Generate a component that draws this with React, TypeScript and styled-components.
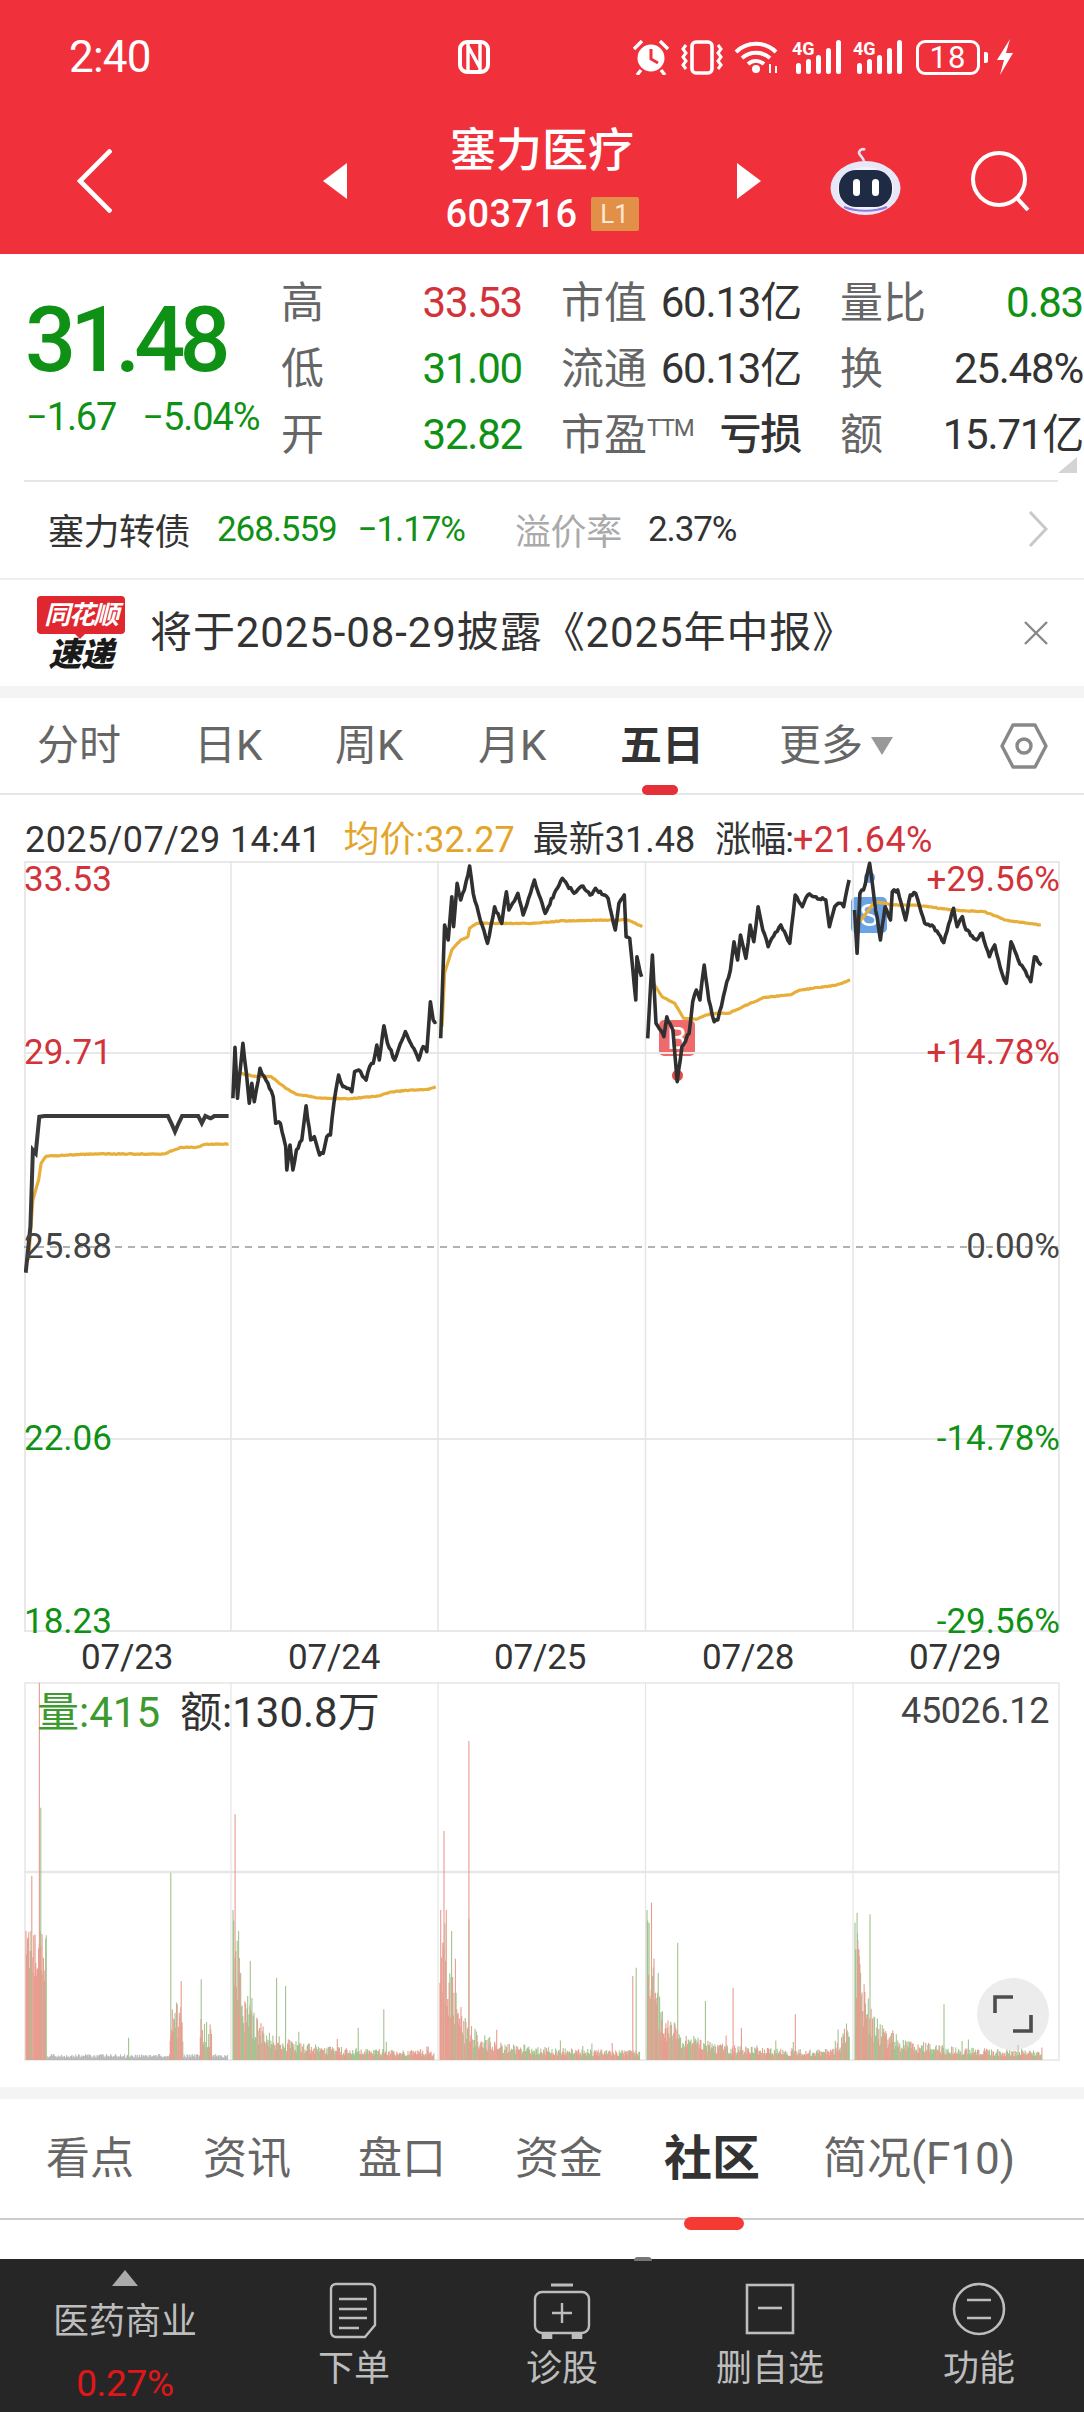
import React from "react";
import styled, { createGlobalStyle } from "styled-components";

const FONT = `Roboto, "Noto Sans CJK SC", sans-serif`;
const GREEN = "#0f9115";
const RED = "#d2323a";

const Global = createGlobalStyle`
  html, body { margin: 0; padding: 0; background: #fff; }
  * { box-sizing: border-box; }
  body { font-family: ${FONT}; }
`;

const Page = styled.div`
  width: 1084px; height: 2412px; overflow: hidden; display: flex; flex-direction: column; background: #fff; color: #333;
`;
const Header = styled.header`
  height: 254px; background: #f0313c; color: #fff; display: flex; flex-direction: column; flex: none;
`;
const StatusBar = styled.div`
  height: 100px; padding: 14px 70px 0 69px; display: flex; align-items: center;
`;
const Time = styled.span`font-size: 44px; letter-spacing: -.8px; line-height: 1;`;
const Nfc = styled.svg`margin-left: 307px;`;
const StatusIcons = styled.div`
  margin-left: auto; display: flex; align-items: center;
`;
const SignalIcon = styled.svg<{ $ml: number }>`margin-left: ${p => p.$ml}px; margin-top: -6px;`;
const Battery = styled.div`
  width: 64px; height: 35px; border: 3px solid #fff; border-radius: 9px; margin-left: 12px;
  font-size: 31px; line-height: 29px; text-align: center; letter-spacing: 1px;
`;
const BatteryNub = styled.i`
  display: block; width: 4px; height: 11px; background: #fff; border-radius: 0 2px 2px 0; margin-left: 4px;
`;
const NavBar = styled.div`
  height: 154px; padding: 8px 0 0 77px; display: flex; align-items: center;
`;
const TitleBlock = styled.div`
  width: 390px; display: flex; flex-direction: column; align-items: center; margin-top: -4px;
`;
const Title = styled.div`font-size: 46px; line-height: 46px; font-weight: 500; letter-spacing: 0;`;
const CodeRow = styled.div`display: flex; align-items: center; gap: 13px; margin-top: 24px; height: 34px;`;
const Code = styled.span`font-size: 38px; line-height: 34px; letter-spacing: .4px; font-weight: 500;`;
const Level = styled.span`
  width: 48px; height: 34px; background: #e28f48; color: #fbe9d5; border-radius: 2px; font-size: 26px;
  line-height: 34px; text-align: center;
`;
const NavIcon = styled.svg<{ $ml: number }>`margin-left: ${p => p.$ml}px; flex: none;`;

const Quote = styled.section`
  height: 228px; flex: none; padding: 16px 0 0 24px; display: flex; position: relative;
  &::after {
    content: ""; position: absolute; left: 24px; right: 26px; bottom: 0; height: 2px; background: #e6e6e6;
  }
`;
const PriceBlock = styled.div`width: 257px; flex: none; color: ${GREEN};`;
const BigPrice = styled.div`
  font-size: 90px; line-height: 90px; font-weight: 500; margin-top: 26px; letter-spacing: -6px; margin-left: 1px;
`;
const Changes = styled.div`
  display: flex; gap: 26px; font-size: 38px; line-height: 36px; margin-top: 13px; letter-spacing: -1.1px; margin-left: 2px; white-space: nowrap;
`;
const Stats = styled.div`
  display: grid; grid-template-columns: 241px 240px 243px; column-gap: 39px; grid-auto-rows: 66px; width: 803px;
`;
const Stat = styled.div`display: flex; justify-content: space-between; align-items: center;`;
const Label = styled.span`font-size: 43px; color: #666; line-height: 1; white-space: nowrap;`;
const Ttm = styled.sup`font-size: 24px; vertical-align: 14px; line-height: 0; letter-spacing: -1px;`;
const Value = styled.span<{ $c?: string; $bold?: boolean }>`
  font-size: 42px; letter-spacing: -1.2px; color: ${p => p.$c ?? "#333"}; line-height: 1; white-space: nowrap;
  font-weight: ${p => (p.$bold ? 500 : 400)};
`;
const Corner = styled.i`
  position: absolute; right: 7px; bottom: 9px; width: 0; height: 0;
  border-left: 19px solid transparent; border-bottom: 16px solid #d4d4d4;
`;
const BondRow = styled.div`
  height: 96px; flex: none; margin: 0 36px 0 48px; display: flex; align-items: center; font-size: 35px;
  padding-bottom: 2px; letter-spacing: -1.1px; white-space: nowrap;
`;
const BondName = styled.span`font-size: 36px; letter-spacing: -.5px; color: #333; margin-right: 27px;`;
const BondNum = styled.span<{ $c: string; $ml?: number }>`color: ${p => p.$c}; margin-left: ${p => p.$ml ?? 0}px;`;
const BondGray = styled.span`font-size: 36px; letter-spacing: -.3px; color: #aaa; margin-left: 50px;`;
const BondChevron = styled.svg`margin-left: auto; margin-right: 0;`;
const Notice = styled.div`
  height: 108px; flex: none; padding: 0 36px 0 37px; display: flex; align-items: center; border-top: 2px solid #eee;
`;
const Logo = styled.div`width: 88px; flex: none; display: flex; flex-direction: column; align-items: center;`;
const LogoBubble = styled.div`
  width: 88px; height: 38px; background: #e0262e; color: #fff; border-radius: 4px; font-size: 26px; line-height: 38px;
  font-weight: 700; font-style: italic; text-align: center; letter-spacing: -1.5px; position: relative;
  &::after {
    content: ""; position: absolute; left: 36px; top: 36px; border: 7px solid transparent; border-top-color: #e0262e;
    border-bottom: 0;
  }
`;
const LogoSub = styled.div`
  font-size: 33px; font-weight: 900; font-style: italic; line-height: 30px; color: #1a1a1a; margin-top: 6px; letter-spacing: -.5px;
`;
const NoticeText = styled.div`
  font-size: 42px; margin-left: 25px; letter-spacing: .9px; color: #333; white-space: nowrap; line-height: 1;
`;
const NoticeClose = styled.svg`margin-left: auto;`;
const Band = styled.div`height: 12px; flex: none; background: #f4f4f4;`;
const TopTabs = styled.nav`
  height: 97px; flex: none; padding: 0 36px 0 37px; display: grid; align-items: center;
  grid-template-columns: 157px 141px 143px 142px 159px 1fr auto; border-bottom: 2px solid #e6e6e6;
`;
const TopTab = styled.div<{ $on?: boolean }>`
  font-size: 42px; color: ${p => (p.$on ? "#333" : "#666")}; font-weight: ${p => (p.$on ? 700 : 400)};
  display: flex; align-items: center; white-space: nowrap; position: relative; width: fit-content; line-height: 1;
  ${p => p.$on ? `&::after { content: ""; position: absolute; left: 22px; top: 60px; width: 36px; height: 10px; background: #e5303a; border-radius: 5px; }` : ""}
`;
const Caret = styled.i`
  width: 0; height: 0; margin-left: 8px; border: 11px solid transparent; border-top: 18px solid #999; border-bottom: 0;
`;
const InfoRow = styled.div`
  height: 66px; flex: none; padding: 27px 0 0 25px; display: flex; font-size: 36px; line-height: 36px; white-space: nowrap; color: #333;
`;
const InfoItem = styled.span<{ $c?: string; $ml?: number; $ls?: number }>`
  color: ${p => p.$c ?? "inherit"}; margin-left: ${p => p.$ml ?? 0}px; letter-spacing: ${p => p.$ls ?? 0}px;
`;
const ChartPanel = styled.div`
  height: 771px; flex: none; width: 1036px; margin-left: 24px; position: relative;
`;
const ChartSvg = styled.svg`position: absolute; left: 0; top: 0;`;
const AxisLabel = styled.span<{ $c: string; $top: number; $right?: boolean }>`
  position: absolute; top: ${p => p.$top}px; ${p => (p.$right ? "right: 0;" : "left: 0;")}
  color: ${p => p.$c}; font-size: 35px; line-height: 34px; white-space: nowrap;
`;
const Marker = styled.span<{ $c: string; $x: number; $y: number }>`
  position: absolute; left: ${p => p.$x}px; top: ${p => p.$y}px; width: 36px; height: 36px; border-radius: 5px;
  background: ${p => p.$c}; color: #fff; font-size: 32px; line-height: 36px; text-align: center;
`;
const MarkerDot = styled.i<{ $c: string; $x: number; $y: number }>`
  position: absolute; left: ${p => p.$x}px; top: ${p => p.$y}px; width: 11px; height: 11px; border-radius: 50%; background: ${p => p.$c};
`;
const Dates = styled.div`
  height: 50px; flex: none; display: grid; grid-template-columns: 207px 206px 208px 207px 207px; padding: 9px 0 0 81px;
  font-size: 35px; line-height: 34px; color: #333; align-items: start; letter-spacing: -.2px;
`;
const VolumePanel = styled.div`
  height: 379px; width: 1036px; margin-left: 24px; flex: none; position: relative;
`;
const VolLabel = styled.div`
  position: absolute; left: 13px; top: 12px; font-size: 42px; line-height: 38px; display: flex; gap: 20px; white-space: nowrap; color: #333;
`;
const VolGreen = styled.span`color: #3d9a2f;`;
const VolMax = styled.span`position: absolute; right: 11px; top: 12px; font-size: 36px; line-height: 34px; color: #444; letter-spacing: -.4px;`;
const Expand = styled.div`
  position: absolute; left: 953px; top: 296px; width: 72px; height: 72px; border-radius: 50%; background: rgba(205,205,205,.38);
  display: flex; align-items: center; justify-content: center;
`;
const Spacer = styled.div<{ $h: number }>`height: ${p => p.$h}px; flex: none;`;
const BottomTabs = styled.nav`
  height: 121px; flex: none; padding: 0 0 0 46px; display: grid; align-items: center;
  grid-template-columns: 157px 155px 157px 149px 159px auto; border-bottom: 2px solid #ccc;
`;
const BottomTab = styled.div<{ $on?: boolean }>`
  font-size: ${p => (p.$on ? 48 : 44)}px; color: ${p => (p.$on ? "#333" : "#666")}; font-weight: ${p => (p.$on ? 700 : 400)};
  white-space: nowrap; position: relative; width: fit-content; line-height: 1;
  ${p => p.$on ? `&::after { content: ""; position: absolute; left: 20px; top: 82px; width: 60px; height: 13px; background: #f53a33; border-radius: 7px; }` : ""}
`;
const Footer = styled.footer`
  margin-top: auto; height: 153px; flex: none; background: #262626; color: #bdbdbd; position: relative;
  display: grid; grid-template-columns: 250px 208px 208px 208px 210px;
  &::before {
    content: ""; position: absolute; left: 634px; top: -2px; width: 18px; height: 4px; border-radius: 9px 9px 0 0; background: #777;
  }
`;
const SectorCell = styled.div`display: flex; flex-direction: column; align-items: center; padding-top: 11px;`;
const SectorCaret = styled.i`
  width: 0; height: 0; border: 13px solid transparent; border-bottom: 16px solid #aaa; border-top: 0;
`;
const SectorName = styled.div`font-size: 36px; line-height: 36px; margin-top: 18px; white-space: nowrap;`;
const SectorPct = styled.div`font-size: 37px; line-height: 36px; color: #e0171a; margin-top: 26px; letter-spacing: -.3px;`;
const FootItem = styled.div`display: flex; flex-direction: column; align-items: center; padding-top: 23px;`;
const FootIcon = styled.svg`display: block;`;
const FootLabel = styled.div`font-size: 36px; line-height: 36px; margin-top: 12px; white-space: nowrap;`;

/* ---------- chart data ---------- */
type P = [number, number];
const z4 = (a: P[]): P[] => a.map(([x, y]) => [x / 2.8, 860 + y / 3]);
const z5 = (a: P[]): P[] => a.map(([x, y]) => [520 + x / 2.78, 860 + y / 3]);

function rng(seed: number) {
  let s = seed;
  return () => {
    s = (s * 16807) % 2147483647;
    return (s - 1) / 2147483646;
  };
}
function jag(pts: P[], amp: number, seed: number): string {
  const r = rng(seed);
  const out: string[] = [];
  for (let i = 0; i < pts.length - 1; i++) {
    const [a, b] = pts[i];
    const [c, d] = pts[i + 1];
    const n = Math.max(1, Math.floor(Math.abs(c - a) / 1.5));
    for (let k = 0; k < n; k++) {
      const t = k / n;
      const ny = k === 0 ? 0 : (r() - 0.5) * amp * 2;
      out.push(`${(a + (c - a) * t).toFixed(1)},${(b + (d - b) * t + ny).toFixed(1)}`);
    }
  }
  const l = pts[pts.length - 1];
  out.push(`${l[0].toFixed(1)},${l[1].toFixed(1)}`);
  return out.join(" ");
}

const day1 = z4([[72,1238],[85,1100],[92,870],[100,880],[110,770],[125,768],[135,768],[470,768],[480,790],[490,815],[500,790],[510,768],[555,768],[565,790],[575,768],[590,775],[600,768],[640,768]]);
const day2 = z4([[652,715],[658,562],[665,715],[680,550],[690,640],[698,730],[705,670],[712,725],[728,625],[740,650],[750,670],[765,710],[772,790],[785,790],[800,860],[803,930],[812,855],[820,930],[830,870],[845,840],[857,737],[870,840],[880,830],[895,885],[905,880],[915,830],[925,825],[935,730],[948,645],[960,680],[985,695],[993,635],[1005,630],[1025,660],[1035,620],[1045,610],[1055,555],[1062,600],[1075,497],[1085,550],[1105,600],[1115,570],[1135,515],[1150,550],[1172,600],[1185,560],[1195,575],[1205,425],[1213,480],[1222,485]]);
const day3 = [...z4([[1234,535],[1245,195],[1255,240],[1265,110],[1270,200],[1280,70],[1290,120],[1300,90],[1315,18],[1325,100],[1340,160],[1350,195],[1365,250],[1385,140],[1405,190],[1418,95],[1425,150],[1450,100],[1465,165],[1480,115]]), ...z5([[40,60],[70,160],[100,90],[118,55],[150,100],[175,78],[195,105],[210,85],[245,115],[265,210],[275,130],[290,105],[295,230],[305,235],[322,420],[325,290],[338,350]])];
const day4 = z5([[355,535],[368,285],[378,490],[400,530],[408,470],[425,510],[437,665],[450,560],[470,520],[480,425],[490,390],[500,420],[512,315],[525,420],[540,485],[550,480],[570,390],[585,330],[595,245],[605,300],[613,225],[628,295],[640,195],[650,245],[662,140],[675,210],[690,260],[700,235],[725,195],[750,250],[765,105],[785,140],[800,105],[850,120],[860,200],[875,140],[890,130],[900,140],[915,60]]);
const day5 = z5([[930,150],[937,280],[945,100],[955,90],[972,10],[985,120],[1002,240],[1015,140],[1030,180],[1035,95],[1050,90],[1072,180],[1085,105],[1100,100],[1125,190],[1150,200],[1178,248],[1205,145],[1215,200],[1230,170],[1240,210],[1270,240],[1285,220],[1305,290],[1320,255],[1340,340],[1352,370],[1365,245],[1385,300],[1400,325],[1420,365],[1430,290],[1450,315]]);
const gold1 = z4([[80,1200],[92,1020],[108,960],[115,910],[130,888],[260,882],[460,882],[505,862],[550,862],[575,853],[640,852]]);
const gold2 = z4([[672,640],[710,648],[760,650],[800,685],[830,703],[900,715],[980,716],[1060,708],[1090,697],[1150,690],[1200,688],[1220,680]]);
const gold3 = [...z4([[1238,500],[1245,340],[1265,270],[1290,240],[1310,230],[1315,205],[1335,190],[1490,190]]), ...z5([[110,183],[250,180],[300,180],[340,200]])];
const gold4 = z5([[365,360],[395,410],[430,430],[455,475],[490,478],[530,460],[580,460],[640,430],[680,412],[750,405],[780,390],[880,375],[918,360]]);
const gold5 = z5([[945,185],[970,150],[985,125],[1040,135],[1100,135],[1200,150],[1290,155],[1350,180],[1448,195]]);

const VX = [231, 438, 645.5, 853];

/* ---------- volume bars ---------- */
const BASE = 2059;
function buildBars() {
  const r = rng(4242);
  let red = "", green = "", gray = "";
  const add = (kind: number, x: number, h: number) => {
    const s = `M${x.toFixed(1)} ${BASE}V${(BASE - h).toFixed(1)}`;
    if (kind === 0) red += s; else if (kind === 1) green += s; else gray += s;
  };
  for (let x = 26; x < 228; x += 0.7) {
    if (x < 47) { add(r() < 0.7 ? 0 : 1, x, 70 + r() * 60); continue; }
    if (x > 170 && x < 183) { add(r() < 0.5 ? 0 : 1, x, 18 + r() * 40); continue; }
    if (x > 200 && x < 212) { add(r() < 0.5 ? 0 : 1, x, 10 + r() * 32); continue; }
    add(2, x, 2 + r() * 4);
  }
  const days: [number, number, number, number][] = [[233, 434, 115, 0], [440, 640, 150, 0], [647, 850, 115, 45], [855, 1042, 95, 0]];
  for (const [d0, d1, A, close] of days) {
    for (let x = d0; x < d1; x += 0.7) {
      const e = A * Math.exp(-(x - d0) / 10) + 30 * Math.exp(-(x - d0) / 50) + 8 + close * Math.exp(-(d1 - x) / 7);
      const v = r();
      const h = e * (0.4 + r() * 0.75) * (v > 0.96 ? 1.7 : 1);
      add(r() < 0.45 ? 0 : 1, x, Math.min(h, 150));
    }
  }
  const spike = (k: number, X: number, Y: number) => add(k, X / 1.446, BASE - (1660 + Y / 3));
  const list: [number, number, number][] = [
    [0,57,65],[1,59,440],[0,46,645],[0,40,830],[1,247,635],[0,262,960],[1,291,955],[0,340,460],[1,345,810],[1,362,900],
    [1,400,950],[1,413,975],[0,642,510],[0,678,240],[1,678,775],[1,653,810],[0,942,725],[1,980,845],[1,1020,1020],
    [0,1060,980],[0,1150,1060],[1,1240,815],[0,1242,865],[1,1258,760],[1,1365,1030],[1,555,1045],[1,518,1100],
    [0,915,945],[1,920,920],[0,1072,1100],[1,186,1130],
  ];
  list.forEach(([k, X, Y]) => spike(k, X, Y));
  return { red, green, gray };
}
const bars = buildBars();

/* ---------- icons ---------- */
const Alarm = () => (
  <svg width="36" height="35" viewBox="0 0 36 35" fill="none" stroke="#fff">
    <circle cx="18" cy="18" r="13.5" fill="#fff" stroke="none" />
    <path d="M18 9v10l7 4" stroke="#f0313c" strokeWidth="3" />
    <path d="M1 9 9 1M35 9l-8-8M8 30l-4 5M28 30l4 5" strokeWidth="3.4" />
  </svg>
);
const Vibrate = () => (
  <svg width="42" height="35" viewBox="0 0 42 35" fill="none" stroke="#fff" strokeWidth="3" style={{ marginLeft: 12 }}>
    <rect x="11" y="2" width="20" height="31" rx="4" strokeWidth="3.6" />
    <path d="M5 5 2 9l3 4-3 4 3 4-3 4 3 4M37 5l3 4-3 4 3 4-3 4 3 4-3 4" />
  </svg>
);
const Wifi = () => (
  <svg width="46" height="34" viewBox="0 0 46 34" fill="none" stroke="#fff" strokeWidth="4" style={{ marginLeft: 11 }}>
    <path d="M2 12C13 1 31 1 42 12M8 18c8-7 20-7 28 0M14 24c5-4 11-4 16 0" />
    <circle cx="22" cy="29" r="4" fill="#fff" stroke="none" />
    <path d="M36 24v9M42 33v-7" strokeWidth="2" />
  </svg>
);
const Signal = ({ ml }: { ml: number }) => (
  <SignalIcon $ml={ml} width="51" height="40" viewBox="0 -6 51 40">
    <text x="0" y="15" fontSize="18" fontWeight="700" fill="#fff" fontFamily="Roboto, sans-serif">4G</text>
    <g fill="#fff">
      <rect x="4" y="23" width="5" height="11" rx="2.5" />
      <rect x="14" y="19" width="5" height="15" rx="2.5" />
      <rect x="24" y="15" width="5" height="19" rx="2.5" />
      <rect x="34" y="8" width="5" height="26" rx="2.5" />
      <rect x="44" y="0" width="5" height="34" rx="2.5" />
    </g>
  </SignalIcon>
);
const Robot = () => (
  <NavIcon $ml={69} width="71" height="68" viewBox="0 0 71 68">
    <path d="M34 14c-1-4-4-5-5-8 0-3 4-5 6-3" fill="none" stroke="#dfe0f2" strokeWidth="2.6" />
    <ellipse cx="35.5" cy="41" rx="35" ry="27" fill="#e7e7f7" />
    <ellipse cx="35.5" cy="42" rx="28" ry="22" fill="#fff" opacity=".5" />
    <rect x="9" y="23" width="53" height="37" rx="17" fill="#1f2a44" />
    <rect x="23" y="32" width="7" height="17" rx="3.5" fill="#fff" />
    <rect x="42" y="32" width="7" height="17" rx="3.5" fill="#fff" />
    <path d="M14 60c12 5 31 5 43 0" stroke="#8b7ce0" strokeWidth="2" fill="none" />
  </NavIcon>
);

export default function App() {
  return (
    <Page>
      <Global />
      <Header>
        <StatusBar>
          <Time>2:40</Time>
          <Nfc width="32" height="34" viewBox="0 0 32 34" fill="none" stroke="#fff">
            <rect x="2" y="2" width="28" height="30" rx="7" strokeWidth="4" />
            <path d="M10 3v28M22 3v28M10 6l12 22" strokeWidth="3.4" />
          </Nfc>
          <StatusIcons>
            <Alarm />
            <Vibrate />
            <Wifi />
            <Signal ml={12} />
            <Signal ml={10} />
            <Battery>18</Battery>
            <BatteryNub />
            <svg width="18" height="36" viewBox="0 0 18 36" style={{ marginLeft: 8 }}>
              <path d="M14 0 1 21h7L4 36 17 14h-7z" fill="#fff" />
            </svg>
          </StatusIcons>
        </StatusBar>
        <NavBar>
          <svg width="35" height="64" viewBox="0 0 35 64" fill="none" stroke="#fff" strokeWidth="4.6">
            <path d="M34 1 3 32l31 31" />
          </svg>
          <NavIcon $ml={211} width="24" height="36" viewBox="0 0 24 36"><path d="M24 0v36L0 18z" fill="#fff" /></NavIcon>
          <TitleBlock>
            <Title>塞力医疗</Title>
            <CodeRow>
              <Code>603716</Code>
              <Level>L1</Level>
            </CodeRow>
          </TitleBlock>
          <svg width="24" height="36" viewBox="0 0 24 36"><path d="M0 0v36l24-18z" fill="#fff" /></svg>
          <Robot />
          <NavIcon $ml={69} width="60" height="60" viewBox="0 0 60 60" fill="none" stroke="#fff" strokeWidth="4">
            <circle cx="29" cy="28" r="26" />
            <path d="m46 46 12 13" />
          </NavIcon>
        </NavBar>
      </Header>

      <Quote>
        <PriceBlock>
          <BigPrice>31.48</BigPrice>
          <Changes><span>−1.67</span><span>−5.04%</span></Changes>
        </PriceBlock>
        <Stats>
          <Stat><Label>高</Label><Value $c={RED}>33.53</Value></Stat>
          <Stat><Label>市值</Label><Value>60.13亿</Value></Stat>
          <Stat><Label>量比</Label><Value $c={GREEN}>0.83</Value></Stat>
          <Stat><Label>低</Label><Value $c={GREEN}>31.00</Value></Stat>
          <Stat><Label>流通</Label><Value>60.13亿</Value></Stat>
          <Stat><Label>换</Label><Value>25.48%</Value></Stat>
          <Stat><Label>开</Label><Value $c={GREEN}>32.82</Value></Stat>
          <Stat><Label>市盈<Ttm>TTM</Ttm></Label><Value $bold>亏损</Value></Stat>
          <Stat><Label>额</Label><Value>15.71亿</Value></Stat>
        </Stats>
        <Corner />
      </Quote>

      <BondRow>
        <BondName>塞力转债</BondName>
        <BondNum $c={GREEN}>268.559</BondNum>
        <BondNum $c={GREEN} $ml={21}>−1.17%</BondNum>
        <BondGray>溢价率</BondGray>
        <BondNum $c="#333" $ml={26}>2.37%</BondNum>
        <BondChevron width="20" height="36" viewBox="0 0 20 36" fill="none" stroke="#c8c8c8" strokeWidth="3">
          <path d="m2 1 16 17L2 35" />
        </BondChevron>
      </BondRow>

      <Notice>
        <Logo>
          <LogoBubble>同花顺</LogoBubble>
          <LogoSub>速递</LogoSub>
        </Logo>
        <NoticeText>将于2025-08-29披露《2025年中报》</NoticeText>
        <NoticeClose width="24" height="24" viewBox="0 0 24 24" fill="none" stroke="#888" strokeWidth="2.4">
          <path d="m1 1 22 22M23 1 1 23" />
        </NoticeClose>
      </Notice>

      <Band />

      <TopTabs>
        <TopTab>分时</TopTab>
        <TopTab>日K</TopTab>
        <TopTab>周K</TopTab>
        <TopTab>月K</TopTab>
        <TopTab $on>五日</TopTab>
        <TopTab>更多<Caret /></TopTab>
        <svg width="48" height="46" viewBox="0 0 48 46" fill="none" stroke="#888" strokeWidth="3.4">
          <path d="M13 2h22l11 21-11 21H13L2 23z" strokeLinejoin="round" />
          <circle cx="24" cy="23" r="7" />
        </svg>
      </TopTabs>

      <InfoRow>
        <InfoItem $ls={0.4}>2025/07/29 14:41</InfoItem>
        <InfoItem $c="#e2a52a" $ml={22}>均价:32.27</InfoItem>
        <InfoItem $ml={18}>最新31.48</InfoItem>
        <InfoItem $ml={20} $ls={-1}>涨幅:</InfoItem>
        <InfoItem $c={RED} $ls={.4}>+21.64%</InfoItem>
      </InfoRow>

      <ChartPanel>
        <Marker $c="#ee6b6b" $x={635} $y={159}>B</Marker>
        <MarkerDot $c="#e04a4a" $x={648} $y={209} />
        <Marker $c="#6ba3e5" $x={827} $y={36}>S</Marker>
        <MarkerDot $c="#6ba3e5" $x={840} $y={11} />
        <ChartSvg width="1036" height="771" viewBox="24 861 1036 771" fill="none">
          <rect x="25" y="862" width="1034" height="769" stroke="#e8e8e8" strokeWidth="2" />
          <path d="M24 1053H1060M24 1439H1060" stroke="#e8e8e8" strokeWidth="2" />
          {VX.map(x => <path key={x} d={`M${x} 861V1631`} stroke="#e4e4e4" strokeWidth="1.5" />)}
          <path d="M24 1247H1060" stroke="#999" strokeWidth="1.6" strokeDasharray="7 6" />
          {[gold1, gold2, gold3, gold4, gold5].map((g, i) => (
            <polyline key={i} points={jag(g, 0.4, 77 + i)} stroke="#e8ae3a" strokeWidth="3.2" strokeLinejoin="round" />
          ))}
          <polyline points={jag(day1, 0, 5)} stroke="#3a3a3a" strokeWidth="4" />
          {[day2, day3, day4, day5].map((d, i) => (
            <polyline key={i} points={jag(d, 1.6, 991 + i * 37)} stroke="#303030" strokeWidth="3.6" strokeLinejoin="round" />
          ))}
        </ChartSvg>
        <AxisLabel $c={RED} $top={2}>33.53</AxisLabel>
        <AxisLabel $c={RED} $top={175}>29.71</AxisLabel>
        <AxisLabel $c="#444" $top={369}>25.88</AxisLabel>
        <AxisLabel $c={GREEN} $top={561}>22.06</AxisLabel>
        <AxisLabel $c={GREEN} $top={744}>18.23</AxisLabel>
        <AxisLabel $c={RED} $top={2} $right>+29.56%</AxisLabel>
        <AxisLabel $c={RED} $top={175} $right>+14.78%</AxisLabel>
        <AxisLabel $c="#444" $top={369} $right>0.00%</AxisLabel>
        <AxisLabel $c={GREEN} $top={561} $right>-14.78%</AxisLabel>
        <AxisLabel $c={GREEN} $top={744} $right>-29.56%</AxisLabel>
      </ChartPanel>

      <Dates>
        <span>07/23</span><span>07/24</span><span>07/25</span><span>07/28</span><span>07/29</span>
      </Dates>

      <VolumePanel>
        <ChartSvg width="1036" height="379" viewBox="24 1681 1036 379" fill="none">
          <rect x="25" y="1682" width="1034" height="377" stroke="#ececec" strokeWidth="2" />
          <path d="M24 1871H1060" stroke="#e8e8e8" strokeWidth="2.4" />
          {VX.map(x => <path key={x} d={`M${x} 1681V2059`} stroke="#e4e4e4" strokeWidth="1.2" />)}
          <path d={bars.gray} stroke="#b5b5b5" strokeWidth="1" />
          <path d={bars.green} stroke="#a3c490" strokeWidth="1.1" />
          <path d={bars.red} stroke="#e99c90" strokeWidth="1.1" />
        </ChartSvg>
        <VolLabel>
          <VolGreen>量:415</VolGreen>
          <span>额:130.8万</span>
        </VolLabel>
        <VolMax>45026.12</VolMax>
        <Expand>
          <svg width="40" height="38" viewBox="0 0 40 38" fill="none" stroke="#4d4d4d" strokeWidth="3.6">
            <path d="M2 18V2h18M38 20v16H20" />
          </svg>
        </Expand>
      </VolumePanel>

      <Spacer $h={26} />
      <Band />

      <BottomTabs>
        <BottomTab>看点</BottomTab>
        <BottomTab>资讯</BottomTab>
        <BottomTab>盘口</BottomTab>
        <BottomTab>资金</BottomTab>
        <BottomTab $on>社区</BottomTab>
        <BottomTab>简况(F10)</BottomTab>
      </BottomTabs>

      <Footer>
        <SectorCell>
          <SectorCaret />
          <SectorName>医药商业</SectorName>
          <SectorPct>0.27%</SectorPct>
        </SectorCell>
        <FootItem>
          <FootIcon width="50" height="57" viewBox="0 0 50 57" fill="none" stroke="#bdbdbd" strokeWidth="2.4">
            <path d="M9 2h34a5 5 0 0 1 5 5v36l-10 12H9a5 5 0 0 1-5-5V7a5 5 0 0 1 5-5z" transform="translate(-2 0)" />
            <path d="M10 17h28M10 27h28M10 36h28M10 46h20" strokeWidth="2.6" />
          </FootIcon>
          <FootLabel>下单</FootLabel>
        </FootItem>
        <FootItem>
          <FootIcon width="58" height="57" viewBox="0 0 58 57" fill="none" stroke="#bdbdbd" strokeWidth="2.4">
            <path d="M18 3h22" strokeWidth="3" />
            <rect x="2" y="10" width="54" height="41" rx="7" />
            <path d="M29 21v20M19 31h20" />
            <path d="M10 52v4h8v-4M40 52v4h8v-4" strokeWidth="2.6" fill="#bdbdbd" />
          </FootIcon>
          <FootLabel>诊股</FootLabel>
        </FootItem>
        <FootItem>
          <FootIcon width="50" height="57" viewBox="0 0 50 57" fill="none" stroke="#bdbdbd" strokeWidth="2.6">
            <rect x="2" y="3" width="46" height="48" />
            <path d="M13 26h24" />
          </FootIcon>
          <FootLabel>删自选</FootLabel>
        </FootItem>
        <FootItem>
          <FootIcon width="54" height="57" viewBox="0 0 54 57" fill="none" stroke="#bdbdbd" strokeWidth="2.6">
            <ellipse cx="27" cy="27" rx="25" ry="25" />
            <path d="M15 18h24M15 36h24" />
          </FootIcon>
          <FootLabel>功能</FootLabel>
        </FootItem>
      </Footer>
    </Page>
  );
}
